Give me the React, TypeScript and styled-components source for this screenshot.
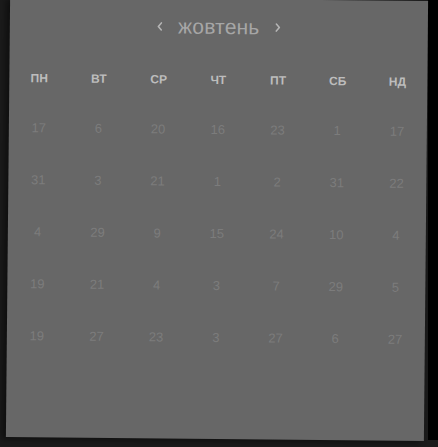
import React from 'react';
import styled, { createGlobalStyle } from 'styled-components';

const GlobalStyle = createGlobalStyle`
  html, body {
    margin: 0;
    padding: 0;
    background: #1b1b1b;
    overflow: hidden;
  }
  body {
    font-family: "Liberation Sans", Arial, sans-serif;
  }
  * {
    box-sizing: border-box;
  }
`;

const Page = styled.div`
  display: flex;
  width: 438px;
  height: 447px;
  overflow: hidden;
`;

const Stage = styled.div`
  flex: 0 0 428px;
  padding-left: 8px;
`;

const Edge = styled.div`
  flex: 0 0 10px;
  height: 440px;
  background: #000;
`;

const Card = styled.div`
  width: 418px;
  height: 440px;
  margin-top: -1px;
  background: #676767;
  transform: rotate(0.55deg);
  box-shadow: -4px 2px 6px rgba(0, 0, 0, 0.45);
  display: flex;
  flex-direction: column;
  color: #a9a9a9;
`;

const Header = styled.div`
  display: flex;
  justify-content: center;
  align-items: center;
  gap: 14px;
  height: 56px;
`;

const Title = styled.span`
  font-size: 21px;
  font-weight: 400;
  color: #a6a6a6;
  letter-spacing: 0.2px;
`;

const Arrow = styled.button`
  border: 0;
  background: none;
  padding: 0;
  display: flex;
  align-items: center;
  color: #b4b4b4;
  cursor: pointer;
`;

const Grid = styled.div`
  display: grid;
  grid-template-columns: repeat(7, 1fr);
`;

const WeekDay = styled.div`
  height: 48px;
  display: flex;
  align-items: center;
  justify-content: center;
  font-size: 12px;
  font-weight: 700;
  color: #bdbdbd;
  padding-top: 2px;
`;

const Day = styled.div`
  height: 52px;
  display: flex;
  align-items: center;
  justify-content: center;
  font-size: 13px;
  color: #7c7c7c;
`;

const days = ['ПН', 'ВТ', 'СР', 'ЧТ', 'ПТ', 'СБ', 'НД'];

const weeks = [
  [17, 6, 20, 16, 23, 1, 17],
  [31, 3, 21, 1, 2, 31, 22],
  [4, 29, 9, 15, 24, 10, 4],
  [19, 21, 4, 3, 7, 29, 5],
  [19, 27, 23, 3, 27, 6, 27],
];

const Chevron = ({ dir }: { dir: 'left' | 'right' }) => (
  <svg width="8" height="10" viewBox="0 0 8 10" fill="none">
    <path
      d={dir === 'left' ? 'M5.5 1.5 L2.5 5 L5.5 8.5' : 'M2.5 1.5 L5.5 5 L2.5 8.5'}
      stroke="currentColor"
      strokeWidth="1.6"
      strokeLinecap="round"
      strokeLinejoin="round"
    />
  </svg>
);

export default function App() {
  return (
    <Page>
      <GlobalStyle />
      <Stage>
        <Card>
          <Header>
            <Arrow aria-label="попередній місяць">
              <Chevron dir="left" />
            </Arrow>
            <Title>жовтень</Title>
            <Arrow aria-label="наступний місяць">
              <Chevron dir="right" />
            </Arrow>
          </Header>
          <Grid>
            {days.map((d) => (
              <WeekDay key={d}>{d}</WeekDay>
            ))}
            {weeks.map((week, i) =>
              week.map((n, j) => <Day key={`${i}-${j}`}>{n}</Day>)
            )}
          </Grid>
        </Card>
      </Stage>
      <Edge />
    </Page>
  );
}
